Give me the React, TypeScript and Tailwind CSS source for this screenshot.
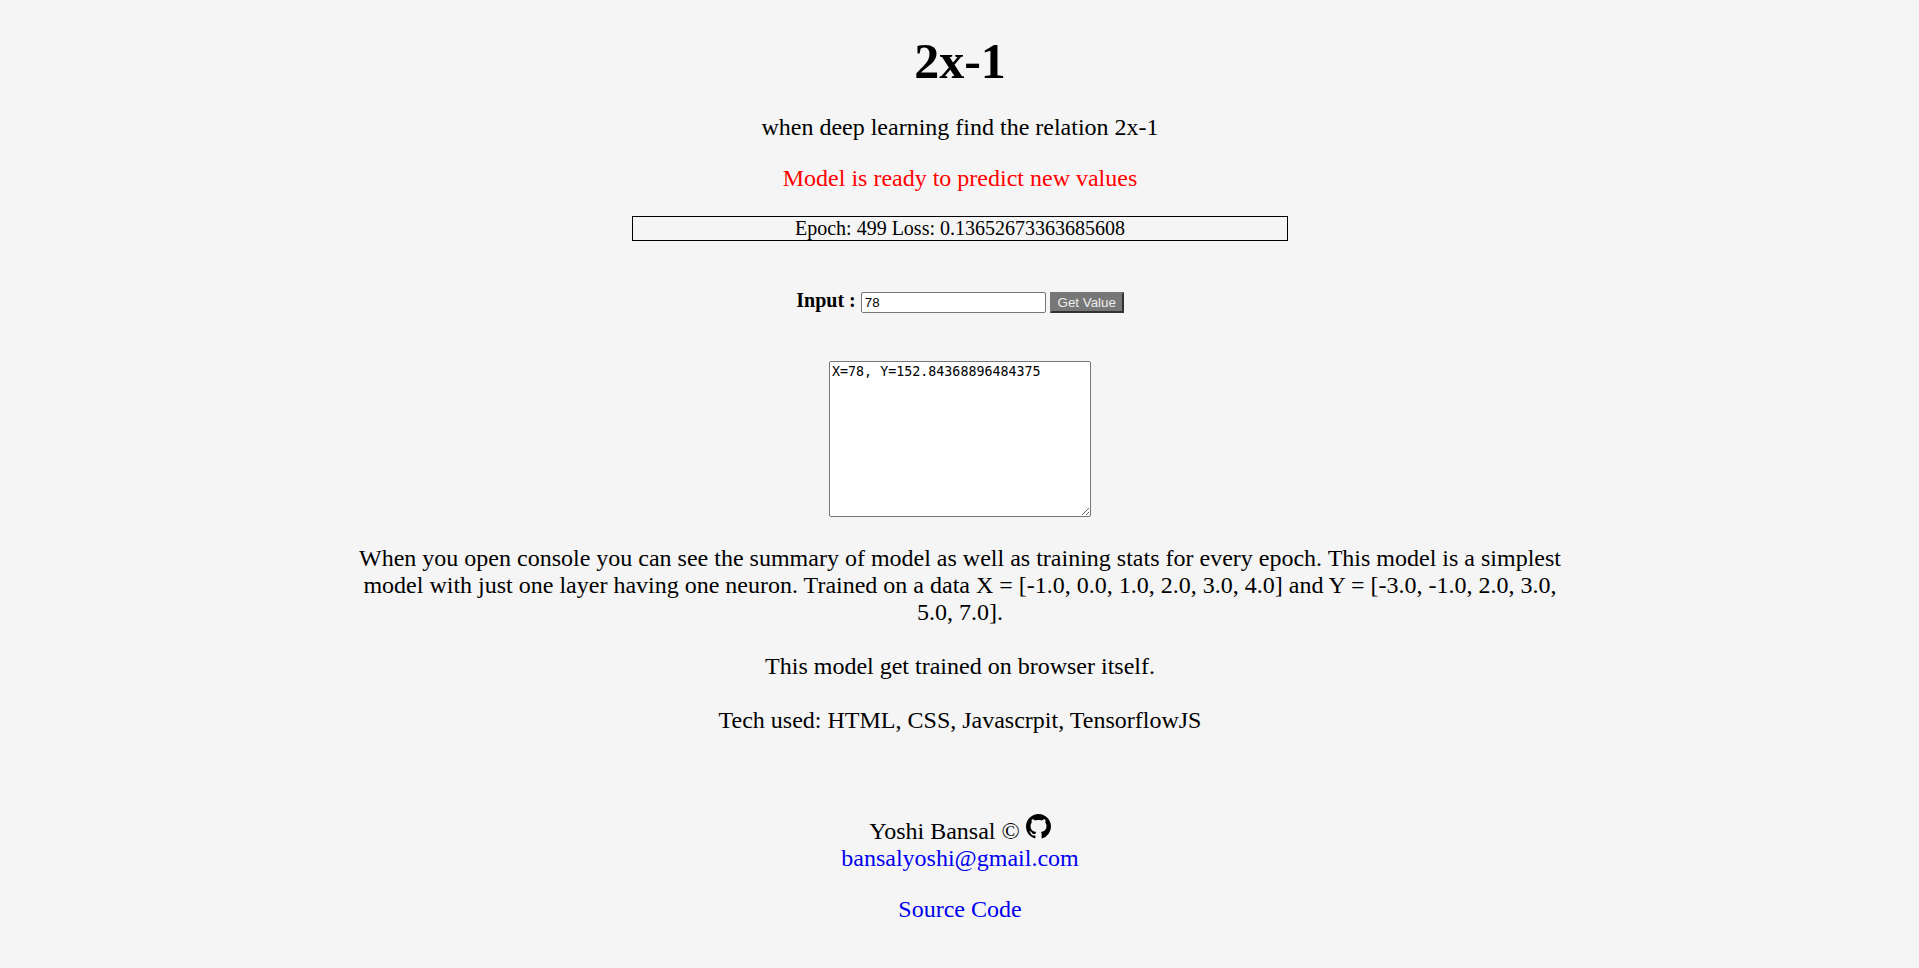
import React from "react";

const serif = "font-['Liberation_Serif',serif]";

export default function App() {
  return (
    <div className={`min-h-[968px] bg-[#f5f5f5] pl-[1px] text-black text-center text-[24px] leading-[27px] ${serif}`}>
      <h1 className="pt-[33px] text-[50px] leading-[56px] font-bold">2x-1</h1>
      <p className="mt-[25px]">when deep learning find the relation 2x-1</p>
      <p className="mt-[24px] text-[#ff0000]">Model is ready to predict new values</p>
      <div className="mx-auto mt-[24px] w-[656px] h-[25px] border border-black text-[20px] leading-[23px]">
        Epoch: 499 Loss: 0.13652673363685608
      </div>
      <div className="mt-[48px] flex items-baseline justify-center">
        <label className="font-bold text-[20px] leading-[23px] mr-[5px]">Input :</label>
        <input
          defaultValue="78"
          className="w-[185px] h-[21px] bg-white border border-[#767676] rounded-[2px] pl-[3px] pr-[2px] text-[13.3333px] text-left font-['Liberation_Sans',sans-serif]"
        />
        <button className="ml-[4px] w-[74px] h-[21px] bg-[#777777] text-[#eeeeee] text-[13.3333px] leading-[15px] font-['Liberation_Sans',sans-serif] border-2 border-solid border-t-[#777777] border-l-[#777777] border-r-[#333333] border-b-[#333333]">
          Get Value
        </button>
      </div>
      <div className="mt-[48px] flex justify-center">
        <textarea
          defaultValue="X=78, Y=152.84368896484375"
          className="block w-[262px] h-[156px] bg-white border border-[#767676] rounded-[2px] p-[2px] text-[13.3333px] leading-[15px] text-left font-['DejaVu_Sans_Mono',monospace]"
        />
      </div>
      <div className="mx-auto mt-[28px] w-[1220px]">
        <p>
          When you open console you can see the summary of model as well as training stats for every epoch. This model is a simplest model with just one layer having one neuron. Trained on a data X = [-1.0, 0.0, 1.0, 2.0, 3.0, 4.0] and Y = [-3.0, -1.0, 2.0, 3.0, 5.0, 7.0].
        </p>
        <p className="mt-[27px]">This model get trained on browser itself.</p>
        <p className="mt-[27px]">Tech used: HTML, CSS, Javascrpit, TensorflowJS</p>
      </div>
      <div className="mt-[84px]">
        <p className="flex items-end justify-center h-[27px]">
          <span>Yoshi Bansal ©&nbsp;</span>
          <svg viewBox="0 0 16 16" className="w-[25px] h-[25px] mb-[6px]" fill="#000000">
            <path d="M8 0C3.58 0 0 3.58 0 8c0 3.54 2.29 6.53 5.47 7.59.4.07.55-.17.55-.38 0-.19-.01-.82-.01-1.49-2.01.37-2.53-.49-2.69-.94-.09-.23-.48-.94-.82-1.13-.28-.15-.68-.52-.01-.53.63-.01 1.08.58 1.23.82.72 1.21 1.87.87 2.33.66.07-.52.28-.87.51-1.07-1.78-.2-3.64-.89-3.64-3.95 0-.87.31-1.59.82-2.15-.08-.2-.36-1.02.08-2.12 0 0 .67-.21 2.2.82.64-.18 1.32-.27 2-.27.68 0 1.36.09 2 .27 1.53-1.04 2.2-.82 2.2-.82.44 1.1.16 1.92.08 2.12.51.56.82 1.27.82 2.15 0 3.07-1.87 3.75-3.65 3.95.29.25.54.73.54 1.48 0 1.07-.01 1.93-.01 2.2 0 .21.15.46.55.38A8.013 8.013 0 0 0 16 8c0-4.42-3.58-8-8-8z" />
          </svg>
        </p>
        <a href="#" className="block text-[#0000ee]">bansalyoshi@gmail.com</a>
        <a href="#" className="block mt-[24px] text-[#0000ee]">Source Code</a>
      </div>
    </div>
  );
}
